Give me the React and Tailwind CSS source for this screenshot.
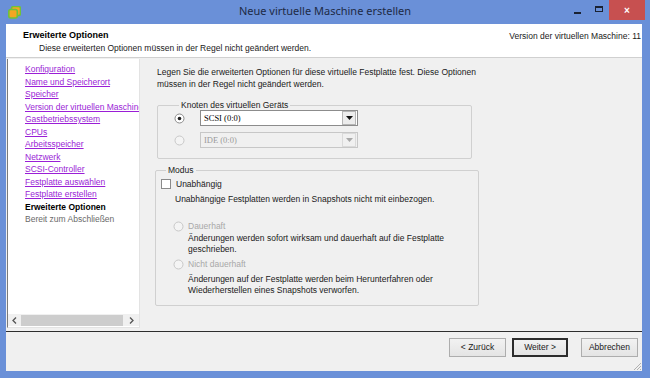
import React from "react";

const F = { fontFamily: '"Liberation Sans", Arial, sans-serif' };

function Radio({ checked, disabled }) {
  return (
    <svg width="11" height="11" viewBox="0 0 11 11" className="shrink-0">
      <circle cx="5.5" cy="5.5" r="4.5" fill={disabled ? "#f4f4f4" : "#ffffff"} stroke={disabled ? "#c8c8c8" : "#8a8a8a"} strokeWidth="1" />
      {checked && <circle cx="5.5" cy="5.5" r="1.8" fill="#202020" />}
    </svg>
  );
}

function Select({ label, disabled }) {
  return (
    <div className={`w-[158px] h-[16px] flex items-center border ${disabled ? "border-[#c7c7c7] bg-[#f0f0f0] text-[#9a9a9a]" : "border-[#8c8c8c] bg-white text-black"}`}>
      <span className="flex-1 pl-[3px] text-[8.5px] leading-none" style={{ fontFamily: '"Liberation Serif", serif' }}>{label}</span>
      <div className={`w-[14px] h-[14px] mr-[1px] flex items-center justify-center border ${disabled ? "border-[#dadada] bg-[#f0f0f0]" : "border-[#b5b5b5] bg-[#ececec]"}`}>
        <svg width="7" height="4" viewBox="0 0 7 4"><polygon points="0,0 7,0 3.5,4" fill={disabled ? "#a8a8a8" : "#111"} /></svg>
      </div>
    </div>
  );
}

const links = [
  "Konfiguration",
  "Name und Speicherort",
  "Speicher",
  "Version der virtuellen Maschine",
  "Gastbetriebssystem",
  "CPUs",
  "Arbeitsspeicher",
  "Netzwerk",
  "SCSI-Controller",
  "Festplatte auswählen",
  "Festplatte erstellen",
];

export default function App() {
  return (
    <div className="w-[650px] h-[378px] bg-[#6a90d8] flex flex-col overflow-hidden text-[8.5px] text-[#1a1a1a]" style={F}>
      {/* Title bar */}
      <div className="h-[24px] flex items-start shrink-0">
        <div className="w-[28px] h-[24px] flex items-center justify-center">
          <svg width="13" height="13" viewBox="0 0 13 13">
            <rect x="3.5" y="0.5" width="9" height="9" rx="2" fill="#f2a623" stroke="#6fc13a" strokeWidth="1.6" />
            <rect x="0.8" y="3.5" width="8.5" height="8.5" rx="2" fill="#f2a623" stroke="#6fc13a" strokeWidth="1.6" />
          </svg>
        </div>
        <div className="flex-1 text-center pt-[3px] pl-[57px] text-[11px] text-[#1d2a45]" style={{ fontFamily: '"Noto Sans", "Liberation Sans", sans-serif' }}>
          Neue virtuelle Maschine erstellen
        </div>
        <div className="flex items-start">
          <div className="w-[24px] h-[20px] flex items-center justify-center">
            <div className="w-[7px] h-[2px] bg-[#1a2233] mt-[5px]" />
          </div>
          <div className="w-[20px] h-[20px] flex items-center justify-center">
            <div className="w-[8px] h-[6px] border border-[#1a2233] border-t-2 -mt-[2px]" />
          </div>
          <div className="w-[36px] h-[20px] bg-[#c75050] flex items-center justify-center text-white text-[10px] font-bold mr-[5px]">
            ×
          </div>
        </div>
      </div>

      {/* Window body */}
      <div className="flex-1 ml-[6px] mr-[8px] mb-[7px] flex flex-col bg-[#f0f0f0]">
        {/* Header */}
        <div className="h-[34px] bg-white border-b border-[#d0d0d0] flex justify-between shrink-0">
          <div className="pl-[17px] pt-[5px]">
            <div className="font-bold text-[9px] text-black leading-[12px]">Erweiterte Optionen</div>
            <div className="pl-[16px] leading-[12px] mt-[1px]">Diese erweiterten Optionen müssen in der Regel nicht geändert werden.</div>
          </div>
          <div className="pr-[1px] pt-[6px] leading-[12px]">Version der virtuellen Maschine: 11</div>
        </div>

        {/* Main */}
        <div className="flex-1 flex min-h-0">
          {/* Left nav */}
          <div className="w-[133px] ml-[1px] mt-[1px] mb-[3px] bg-white border-l border-l-[#7a7a7a] border-r border-b border-[#e3e3e3] flex flex-col">
            <div className="flex-1 pl-[17px] pt-[4px] overflow-hidden whitespace-nowrap">
              {links.map((l) => (
                <div key={l} className="h-[12.5px] leading-[12.5px] text-[#9a1ed6] underline">{l}</div>
              ))}
              <div className="h-[12.5px] leading-[12.5px] font-bold text-black">Erweiterte Optionen</div>
              <div className="h-[12.5px] leading-[12.5px] text-[#6a6a6a]">Bereit zum Abschließen</div>
            </div>
            <div className="h-[12px] mb-[1px] flex items-center bg-[#f0f0f0]">
              <div className="w-[13px] flex justify-center">
                <svg width="5" height="7" viewBox="0 0 5 7"><polyline points="4,0.5 1,3.5 4,6.5" fill="none" stroke="#555" strokeWidth="1.3" /></svg>
              </div>
              <div className="flex-1 h-[11px] bg-[#cdcdcd]" />
              <div className="w-[16px] flex justify-center">
                <svg width="5" height="7" viewBox="0 0 5 7"><polyline points="1,0.5 4,3.5 1,6.5" fill="none" stroke="#555" strokeWidth="1.3" /></svg>
              </div>
            </div>
          </div>

          {/* Content */}
          <div className="flex-1 pl-[15px] pt-[8px]">
            <div className="pl-[2px] leading-[12px]">
              Legen Sie die erweiterten Optionen für diese virtuelle Festplatte fest. Diese Optionen<br />
              müssen in der Regel nicht geändert werden.
            </div>

            <fieldset className="mt-[10px] ml-[2px] w-[315px] h-[59px] border border-[#d0d0d0] rounded-[2px] pl-[16px]">
              <legend className="ml-[5px] px-[2px] leading-[10px]">Knoten des virtuellen Geräts</legend>
              <div className="flex items-center gap-[15px] mt-[0px]">
                <Radio checked />
                <Select label="SCSI (0:0)" />
              </div>
              <div className="flex items-center gap-[15px] mt-[6px]">
                <Radio disabled />
                <Select label="IDE (0:0)" disabled />
              </div>
            </fieldset>

            <fieldset className="mt-[6px] w-[324px] h-[141px] border border-[#d0d0d0] rounded-[2px] pl-[5px]">
              <legend className="ml-[5px] px-[2px] leading-[10px]">Modus</legend>
              <div className="flex items-center gap-[5px] mt-[3px]">
                <div className="w-[10px] h-[10px] border border-[#8a8a8a] bg-white" />
                <span className="leading-[12px]">Unabhängig</span>
              </div>
              <div className="pl-[14px] mt-[3px] leading-[12px]">Unabhängige Festplatten werden in Snapshots nicht mit einbezogen.</div>

              <div className="flex items-center gap-[4px] mt-[15px] pl-[12px] text-[#a8a8a8]">
                <Radio disabled />
                <span className="leading-[12px]">Dauerhaft</span>
              </div>
              <div className="pl-[27px] mt-[1px] leading-[11px]">
                Änderungen werden sofort wirksam und dauerhaft auf die Festplatte<br />geschrieben.
              </div>

              <div className="flex items-center gap-[4px] mt-[3px] pl-[12px] text-[#a8a8a8]">
                <Radio disabled />
                <span className="leading-[12px]">Nicht dauerhaft</span>
              </div>
              <div className="pl-[27px] mt-[4px] leading-[11px]">
                Änderungen auf der Festplatte werden beim Herunterfahren oder<br />Wiederherstellen eines Snapshots verworfen.
              </div>
            </fieldset>
          </div>
        </div>

        {/* Divider */}
        <div className="h-[1px] bg-[#2e2e2e] shrink-0" />

        {/* Buttons */}
        <div className="h-[39px] shrink-0 flex items-start justify-end pt-[6px] pr-[4px] relative">
          <button className="w-[57px] h-[19px] border border-[#adadad] bg-gradient-to-b from-[#f2f2f2] to-[#e4e4e4] text-[8.5px] text-[#1a1a1a]" style={F}>&lt; Zurück</button>
          <button className="w-[56px] h-[19px] ml-[6px] border-2 border-[#2c2c2c] bg-gradient-to-b from-[#f2f2f2] to-[#e4e4e4] text-[8.5px] text-[#1a1a1a]" style={F}>Weiter &gt;</button>
          <button className="w-[57px] h-[19px] ml-[13px] border border-[#adadad] bg-gradient-to-b from-[#f2f2f2] to-[#e4e4e4] text-[8.5px] text-[#1a1a1a]" style={F}>Abbrechen</button>
          <svg className="absolute right-0 bottom-0" width="10" height="10" viewBox="0 0 10 10">
            <line x1="9" y1="2" x2="2" y2="9" stroke="#b0b0b0" strokeWidth="1" />
            <line x1="9" y1="5" x2="5" y2="9" stroke="#b0b0b0" strokeWidth="1" />
            <line x1="9" y1="8" x2="8" y2="9" stroke="#b0b0b0" strokeWidth="1" />
          </svg>
        </div>
      </div>
    </div>
  );
}
